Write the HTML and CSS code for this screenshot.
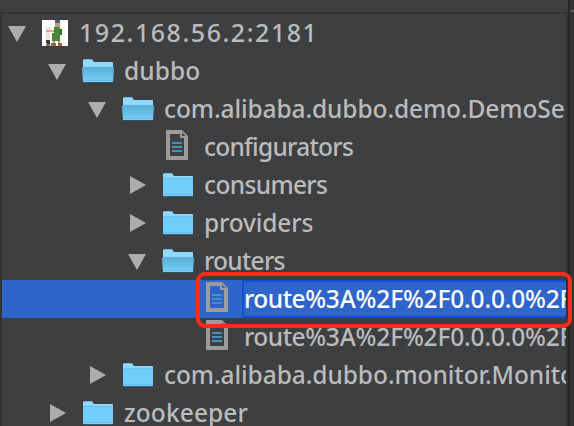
FILE: index.html
```
<!DOCTYPE html>
<html lang="en">
<head>
<meta charset="utf-8">
<title>ZooKeeper tree</title>
<link rel="stylesheet" href="styles.css">
</head>
<body>
<svg width="0" height="0" class="defs">
  <defs>
    <linearGradient id="front" x1="0" y1="0" x2="0" y2="1"><stop offset="0" stop-color="#59add3"/><stop offset=".5" stop-color="#67bfe8"/><stop offset="1" stop-color="#7ed3fb"/></linearGradient>
    <linearGradient id="body" x1="0" y1="0" x2="0" y2="1"><stop offset="0" stop-color="#70cbf8"/><stop offset="1" stop-color="#73d0fc"/></linearGradient>
    <symbol id="open" viewBox="0 0 32 25">
      <path d="M1 23V1.5Q1 .3 2.2 .3H10L12 3H30Q31 3 31 4.2V23Z" fill="#91dafd"/>
      <path d="M0 9.5Q0 8 1.2 8H30.8Q32 8 32 9.5L31 23.2H1Z" fill="url(#front)"/>
      <path d="M1 21.3H31" stroke="#55aedb" stroke-width=".8"/>
      <path d="M1 23.8H31" stroke="#2f4654" stroke-width=".9"/>
    </symbol>
    <symbol id="closed" viewBox="0 0 32 25">
      <path d="M1 23V1.5Q1 .3 2.2 .3H10L12 3H30Q31 3 31 4.2V23.3H1Z" fill="#91dafd"/>
      <path d="M1 5.5H31V23.3H1Z" fill="url(#body)"/>
      <path d="M1 5.3H31M1 21.3H31" stroke="#55b3e2" stroke-width=".7"/>
      <path d="M1 23.8H31" stroke="#2f4654" stroke-width=".9"/>
    </symbol>
    <symbol id="doc" viewBox="0 0 22 30">
      <path d="M0 0H16L22 6V30H0ZM4 4V26H18V8H14V4ZM16 2.5V6H19.5Z" fill="#9c9c9c" fill-rule="evenodd"/>
      <path d="M6 13H16M6 17H16M6 21H16" stroke="#4591bd" stroke-width="2"/>
    </symbol>
    <symbol id="keeper" viewBox="0 0 26 26">
      <path d="M0 0H26V26H0Z" fill="#fff"/>
      <path d="M4 7H8V20H4Z" fill="#f3e4dc"/><path d="M4 10H12V12H4Z" fill="#dda98a"/>
      <path d="M13 2H18V7H13Z" fill="#c79a7c"/><path d="M13 0H18V3H13Z" fill="#4b5f88"/>
      <path d="M12 7H18V13H18V21H10V13H12Z" fill="#458637"/><path d="M18 9H20V15H18Z" fill="#397229"/>
      <path d="M11 21H13V24H11ZM16 21H18V24H16Z" fill="#c89070"/>
      <path d="M9 23H14V26H9ZM16 23H20V26H16Z" fill="#94663f"/>
      <path d="M4 20H8V26H5V23H4Z" fill="#443334"/><path d="M4 24H8V26H4Z" fill="#8d6a5b"/>
    </symbol>
    <symbol id="down" viewBox="0 0 18 16"><path d="M0 0H18L9 16Z" fill="#adadad"/></symbol>
    <symbol id="right" viewBox="0 0 18 18"><path d="M2 0V18L18 9Z" fill="#adadad"/></symbol>
  </defs>
</svg>
<div class="window">
  <div class="tree">
    <div class="row l0"><svg class="arrow down"><use href="#down"/></svg><svg class="keeper"><use href="#keeper"/></svg><span class="label host">192.168.56.2:2181</span></div>
    <div class="row l1"><svg class="arrow down"><use href="#down"/></svg><svg class="folder"><use href="#open"/></svg><span class="label dubbo">dubbo</span></div>
    <div class="row l2"><svg class="arrow down"><use href="#down"/></svg><svg class="folder"><use href="#open"/></svg><span class="label demo">com.alibaba.dubbo.demo.DemoSe</span></div>
    <div class="row l3"><span class="arrow"></span><svg class="doc"><use href="#doc"/></svg><span class="label conf">configurators</span></div>
    <div class="row l3"><svg class="arrow"><use href="#right"/></svg><svg class="folder"><use href="#closed"/></svg><span class="label cons">consumers</span></div>
    <div class="row l3"><svg class="arrow"><use href="#right"/></svg><svg class="folder"><use href="#closed"/></svg><span class="label prov">providers</span></div>
    <div class="row l3"><svg class="arrow down"><use href="#down"/></svg><svg class="folder"><use href="#open"/></svg><span class="label rout">routers</span></div>
    <div class="row l4 selected"><span class="arrow"></span><svg class="doc"><use href="#doc"/></svg><span class="label route"><span class="word">route</span>%3A%2F%2F0.0.0.0%2F</span></div>
    <div class="row l4"><span class="arrow"></span><svg class="doc"><use href="#doc"/></svg><span class="label route"><span class="word">route</span>%3A%2F%2F0.0.0.0%2F</span></div>
    <div class="row l2"><svg class="arrow"><use href="#right"/></svg><svg class="folder"><use href="#closed"/></svg><span class="label moni">com.alibaba.dubbo.monitor.Monito</span></div>
    <div class="row l1"><svg class="arrow"><use href="#right"/></svg><svg class="folder"><use href="#closed"/></svg><span class="label zook">zookeeper</span></div>
  </div>
  <div class="gutter"></div>
  <div class="callout"></div>
</div>
</body>
</html>
```
FILE: styles.css
```
* { box-sizing: border-box; }
body { margin: 0; background: #3d3f41; }
.defs { position: absolute; }
.window {
  position: relative;
  display: flex;
  width: 574px;
  height: 426px;
  padding-top: 12px;
  overflow: hidden;
  background: #3d3f41;
}
.tree {
  width: 568px;
  height: 414px;
  overflow: hidden;
  border: solid #323334;
  border-width: 2px 2px 0 2px;
}
.gutter {
  width: 6px;
  height: 426px;
  margin-top: -12px;
  border-left: 2px solid #282828;
  background: linear-gradient(#313335 10px, #555759 10px, #555759 12px, #313335 12px);
}
.row {
  display: flex;
  align-items: center;
  height: 38px;
  overflow: hidden;
}
.l0 { padding-left: 6px; }
.l1 { padding-left: 46px; }
.l2 { padding-left: 86px; }
.l3 { padding-left: 126px; }
.l4 { padding-left: 166px; }
.row > * { flex: none; }
.arrow { width: 18px; height: 18px; margin-right: 16px; }
.down { height: 16px; margin-top: 2px; }
.keeper { width: 26px; height: 26px; margin-right: 9px; }
.folder { width: 32px; height: 25px; margin: 0 8px 0 0; }
.doc { width: 22px; height: 30px; margin: 0 14px 4px 4px; }
.label {
  height: 38px;
  padding-left: 2px;
  font: 500 24.5px/37px "Noto Sans", "Open Sans", sans-serif;
  color: #bbb;
  white-space: nowrap;
}
.host { font-size: 25px; letter-spacing: 1.55px; }
.dubbo { letter-spacing: .1px; }
.demo { letter-spacing: -.1px; }
.conf { letter-spacing: -.75px; }
.cons { letter-spacing: -.65px; }
.prov { letter-spacing: -.15px; }
.rout { letter-spacing: -.75px; }
.route { letter-spacing: -.17px; }
.word { letter-spacing: -.5px; }
.moni { letter-spacing: -.07px; }
.zook { letter-spacing: .1px; }
.selected { background: #2f65ca; }
.selected .label {
  width: 324px;
  border: 2px solid #0f50d2;
  border-right: 0;
  padding-left: 0;
  line-height: 33px;
  color: #fff;
}
.callout {
  position: absolute;
  left: 196px;
  top: 272px;
  width: 376px;
  height: 56px;
  border: 4px solid #ff2a1c;
  border-radius: 9px;
}
```
